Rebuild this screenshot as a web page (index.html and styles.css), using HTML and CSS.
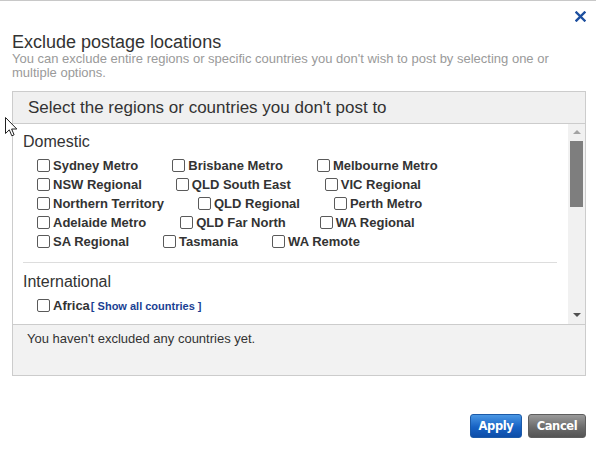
FILE: index.html
```html
<!DOCTYPE html>
<html>
<head>
<meta charset="utf-8">
<link rel="stylesheet" href="styles.css">
</head>
<body>
<div class="dialog">
  <div class="topbar">
    <button class="close" aria-label="Close">
      <svg width="11" height="11" viewBox="0 0 11 11"><path d="M1.5 1.5 L9.5 9.5 M9.5 1.5 L1.5 9.5" stroke="#1d4f9f" stroke-width="2.4" stroke-linecap="square"/></svg>
    </button>
  </div>
  <h1 class="title">Exclude postage locations</h1>
  <p class="sub">You can exclude entire regions or specific countries you don't wish to post by selecting one or multiple options.</p>

  <div class="box">
    <div class="box-head">Select the regions or countries you don't post to</div>
    <div class="scroll-wrap">
      <div class="scroll">
        <div class="group-title">Domestic</div>
        <div class="opts">
          <div class="row">
            <label class="opt"><span class="cb"></span>Sydney Metro</label>
            <label class="opt"><span class="cb"></span>Brisbane Metro</label>
            <label class="opt"><span class="cb"></span>Melbourne Metro</label>
          </div>
          <div class="row">
            <label class="opt"><span class="cb"></span>NSW Regional</label>
            <label class="opt"><span class="cb"></span>QLD South East</label>
            <label class="opt"><span class="cb"></span>VIC Regional</label>
          </div>
          <div class="row">
            <label class="opt"><span class="cb"></span>Northern Territory</label>
            <label class="opt"><span class="cb"></span>QLD Regional</label>
            <label class="opt"><span class="cb"></span>Perth Metro</label>
          </div>
          <div class="row">
            <label class="opt"><span class="cb"></span>Adelaide Metro</label>
            <label class="opt"><span class="cb"></span>QLD Far North</label>
            <label class="opt"><span class="cb"></span>WA Regional</label>
          </div>
          <div class="row">
            <label class="opt"><span class="cb"></span>SA Regional</label>
            <label class="opt"><span class="cb"></span>Tasmania</label>
            <label class="opt"><span class="cb"></span>WA Remote</label>
          </div>
        </div>
        <hr class="divider">
        <div class="group-title">International</div>
        <div class="opts">
          <div class="row">
            <label class="opt tight"><span class="cb"></span>Africa<a class="show-all" href="#">[ Show all countries ]</a></label>
          </div>
        </div>
      </div>
      <div class="scrollbar">
        <div class="arrow up"></div>
        <div class="track"><div class="thumb"></div></div>
        <div class="arrow down"></div>
      </div>
    </div>
    <div class="summary">You haven't excluded any countries yet.</div>
  </div>

  <div class="actions">
    <button class="btn apply">Apply</button>
    <button class="btn cancel">Cancel</button>
  </div>
</div>

<svg class="cursor" width="13" height="21" viewBox="0 0 13 21">
  <path d="M0.5 0.5 L0.5 16.5 L4.3 12.8 L6.8 18.8 L9.1 17.8 L6.6 12 L11.8 12 Z" fill="#fff" stroke="#222" stroke-width="1" stroke-linejoin="round"/>
</svg>
</body>
</html>
```

FILE: styles.css
```css
html, body {
  margin: 0;
  padding: 0;
  background: #ffffff;
}

body {
  font-family: "Liberation Sans", Arial, sans-serif;
  color: #333333;
  border-top: 1px solid #c8c8c8;
  width: 596px;
  height: 459px;
  overflow: hidden;
  position: relative;
}

.dialog {
  padding: 0 10px 0 12px;
}

.topbar {
  display: flex;
  justify-content: flex-end;
  height: 31px;
}

.close {
  margin: 10px 0 0 0;
  padding: 0;
  border: 0;
  background: none;
  width: 11px;
  height: 11px;
  display: flex;
}

.title {
  margin: 0;
  font-size: 18px;
  font-weight: normal;
  color: #333333;
  line-height: 20px;
}

.sub {
  margin: 0;
  font-size: 13px;
  line-height: 14px;
  color: #9a9a9a;
  width: 573px;
}

.box {
  margin-top: 11px;
  border: 1px solid #cccccc;
  width: 572px;
}

.box-head {
  height: 31px;
  line-height: 31px;
  background: #f0f0f0;
  border-bottom: 1px solid #cccccc;
  font-size: 17px;
  padding-left: 15px;
  color: #333333;
}

.scroll-wrap {
  display: flex;
  height: 200px;
}

.scroll {
  flex: 1;
  overflow: hidden;
  padding: 9px 11px 0 10px;
}

.group-title {
  font-size: 16px;
  line-height: 18px;
  color: #333333;
}

.opts {
  padding-left: 14px;
  margin-top: 5px;
}

.row {
  display: flex;
  height: 19px;
  align-items: center;
}

.opt {
  display: flex;
  align-items: center;
  font-size: 13px;
  font-weight: bold;
  color: #333333;
  margin-right: 34px;
  white-space: nowrap;
}

.opt.tight {
  margin-right: 0;
}

.cb {
  width: 11px;
  height: 11px;
  border: 1px solid #5a5a5a;
  border-radius: 2px;
  background: #fff;
  margin-right: 3px;
  flex: none;
}

.show-all {
  font-size: 11px;
  font-weight: bold;
  color: #1a3f93;
  text-decoration: none;
  margin-left: 1px;
}

.divider {
  border: 0;
  border-top: 1px solid #dddddd;
  margin: 11px 0 10px 0;
}

.scrollbar {
  width: 17px;
  background: #f1f1f1;
  display: flex;
  flex-direction: column;
  align-items: center;
}

.arrow {
  width: 0;
  height: 0;
  border-left: 4px solid transparent;
  border-right: 4px solid transparent;
}

.arrow.up {
  border-bottom: 4px solid #a3a3a3;
  margin-top: 6px;
}

.arrow.down {
  border-top: 4px solid #505050;
  margin-bottom: 7px;
}

.track {
  flex: 1;
  width: 100%;
  display: flex;
  justify-content: center;
  padding-top: 7px;
}

.thumb {
  width: 13px;
  height: 66px;
  background: #7e7e7e;
}

.summary {
  background: #f2f2f2;
  border-top: 1px solid #cccccc;
  height: 50px;
  padding-left: 14px;
  font-size: 13px;
  line-height: 28px;
  color: #333333;
}

.actions {
  display: flex;
  justify-content: flex-end;
  gap: 6px;
  margin-top: 38px;
}

.btn {
  height: 24px;
  border: 0;
  border-radius: 3px;
  color: #ffffff;
  font-family: "DejaVu Sans", Verdana, sans-serif;
  font-weight: bold;
  font-size: 11.5px;
  letter-spacing: -0.4px;
  padding: 0;
}

.apply {
  width: 52px;
  background: linear-gradient(#4a97e4, #1762c4 55%, #0d4da8);
  border: 1px solid #1c5aa8;
}

.cancel {
  width: 58px;
  background: linear-gradient(#9a9a9a, #6c6c6c 55%, #545454);
  border: 1px solid #5e5e5e;
}

.cursor {
  position: absolute;
  left: 5px;
  top: 116px;
}
```
